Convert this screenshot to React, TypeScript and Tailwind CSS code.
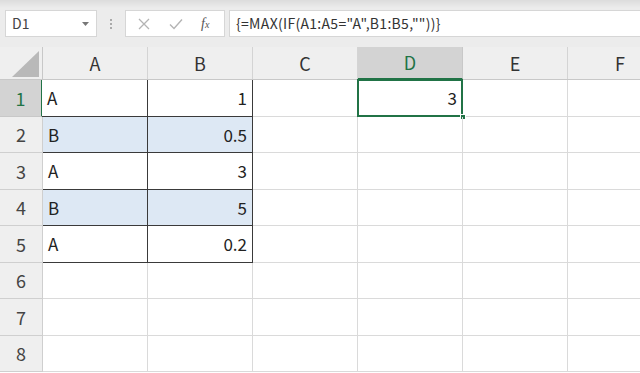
const cols = ["A", "B", "C", "D", "E", "F"]
const rowHeights = ["h-[37px]", "h-[36px]", "h-[37px]", "h-[36px]", "h-[37px]", "h-[36px]", "h-[37px]", "h-[36px]"]

const data: Record<number, [string, string]> = {
  1: ["A", "1"],
  2: ["B", "0.5"],
  3: ["A", "3"],
  4: ["B", "5"],
  5: ["A", "0.2"],
}

const font = "font-['Noto_Sans_CJK_JP','Noto_Sans',sans-serif]"

function Toolbar() {
  return (
    <div className="h-[47px] shrink-0 bg-[linear-gradient(#dcdcdc,#ececec_8px,#ececec)] flex items-start pt-[10px] text-[13px] text-[#444]">
      {/* Name box */}
      <div className="ml-[5px] w-[92px] h-[27px] bg-white border border-[#d6d6d6] flex items-center pl-[6px] pr-[6px]">
        <span className="flex-1 text-[14px]">D1</span>
        <svg width="7" height="4" viewBox="0 0 7 4" className="mr-[1px]">
          <path d="M0 0h7L3.5 4z" fill="#777" />
        </svg>
      </div>
      {/* Separator dots */}
      <div className="w-[28px] h-[27px] flex flex-col items-center justify-center gap-[2px]">
        <span className="w-[2px] h-[2px] bg-[#aaa]" />
        <span className="w-[2px] h-[2px] bg-[#aaa]" />
        <span className="w-[2px] h-[2px] bg-[#aaa]" />
      </div>
      {/* Cancel / enter / fx */}
      <div className="w-[100px] h-[27px] bg-white border border-[#d6d6d6] flex items-center">
        <svg width="12" height="12" viewBox="0 0 12 12" className="ml-[12px]">
          <path d="M1 1l10 10M11 1L1 11" stroke="#b4b4b4" strokeWidth="1.3" />
        </svg>
        <svg width="14" height="12" viewBox="0 0 14 12" className="ml-[19px]">
          <path d="M1 6.5l4 4L13 1.5" stroke="#b4b4b4" strokeWidth="1.4" fill="none" />
        </svg>
        <span className="ml-[18px] font-['Liberation_Serif',serif] italic text-[14px] text-[#555] leading-none">
          f<span className="text-[10px]">x</span>
        </span>
      </div>
      {/* Formula input */}
      <div className="ml-[4px] flex-1 h-[27px] bg-white border border-[#d6d6d6] border-r-0 flex items-center pl-[6px] text-[14px] text-[#333] tracking-[0.3px]">
        {'{=MAX(IF(A1:A5="A",B1:B5,""))}'}
      </div>
    </div>
  )
}

function HeaderRow() {
  return (
    <div className="flex h-[33px] shrink-0 bg-[#efefef] border-b border-[#c8c8c8]">
      <div className="w-[43px] shrink-0 border-r border-[#c8c8c8] relative">
        <svg width="27" height="26" viewBox="0 0 27 26" className="absolute right-[3px] bottom-[2px]">
          <path d="M27 0V26H0z" fill="#b9b9b9" />
        </svg>
      </div>
      {cols.map((c) => (
        <div
          key={c}
          className={
            c === "D"
              ? "w-[105px] shrink-0 border-r border-[#c8c8c8] bg-[#d3d3d3] text-[#217346] flex items-center justify-center text-[18px] -mb-px border-b-2 border-b-[#217346]"
              : "w-[105px] shrink-0 border-r border-[#d4d4d4] text-[#333] flex items-center justify-center text-[18px]"
          }
        >
          {c}
        </div>
      ))}
    </div>
  )
}

function Row({ n, h }: { n: number; h: string }) {
  const d = data[n]
  const inTable = !!d
  const blue = n === 2 || n === 4
  const cell = inTable
    ? `border-r border-b border-[#3a3a3a] ${blue ? "bg-[#dde8f4]" : "bg-white"}`
    : "border-r border-b border-[#dadada]"
  return (
    <div className={`flex ${h} shrink-0`}>
      <div
        className={
          n === 1
            ? "w-[43px] shrink-0 bg-[#d3d3d3] text-[#217346] border-b border-[#c8c8c8] border-r-2 border-r-[#217346] flex items-center justify-center text-[18px]"
            : "w-[43px] shrink-0 bg-[#efefef] text-[#444] border-b border-r border-[#cfcfcf] flex items-center justify-center text-[18px]"
        }
      >
        {n}
      </div>
      <div className={`w-[105px] shrink-0 ${cell} flex items-center pl-[5px] text-[17px] text-[#222] ${n === 1 ? "-ml-px w-[106px]" : ""}`}>
        {d?.[0]}
      </div>
      <div className={`w-[105px] shrink-0 ${cell} flex items-center justify-end pr-[5px] text-[17px] text-[#222]`}>
        {d?.[1]}
      </div>
      <div className="w-[105px] shrink-0 border-r border-b border-[#dadada]" />
      <div className="w-[105px] shrink-0 border-r border-b border-[#dadada] relative flex items-center justify-end pr-[5px] text-[17px] text-[#222]">
        {n === 1 && (
          <>
            3
            <div className="absolute -left-px -top-px -right-px -bottom-px border-2 border-[#217346]" />
            <div className="absolute -right-[4px] -bottom-[4px] w-[6px] h-[6px] bg-[#217346] border border-white" />
          </>
        )}
      </div>
      <div className="w-[105px] shrink-0 border-r border-b border-[#dadada]" />
      <div className="w-[105px] shrink-0 border-r border-b border-[#dadada]" />
    </div>
  )
}

export default function App() {
  return (
    <div className={`w-[640px] h-[373px] overflow-hidden bg-white flex flex-col ${font}`}>
      <Toolbar />
      <HeaderRow />
      {rowHeights.map((h, i) => (
        <Row key={i} n={i + 1} h={h} />
      ))}
    </div>
  )
}
